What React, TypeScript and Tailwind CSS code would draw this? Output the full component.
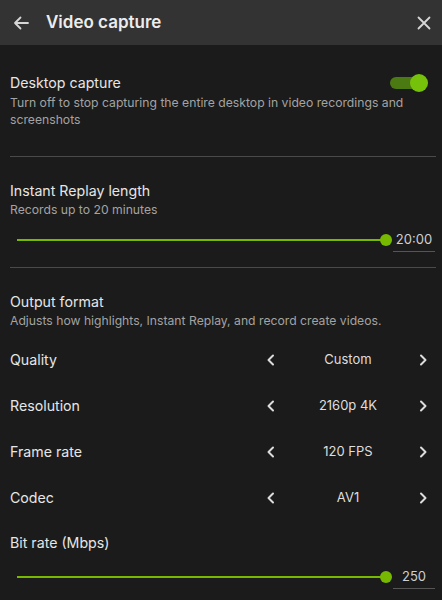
import React from "react";

const font = { fontFamily: "Inter, 'Noto Sans', sans-serif" };

const Chevron = ({ dir }: { dir: "left" | "right" }) => (
  <svg width="10" height="12" viewBox="0 0 10 12" fill="none">
    <path
      d={dir === "left" ? "M7 1.5 L2.5 6 L7 10.5" : "M3 1.5 L7.5 6 L3 10.5"}
      stroke="#dcdcdc"
      strokeWidth="2"
      strokeLinecap="round"
      strokeLinejoin="round"
    />
  </svg>
);

const Slider = ({ value }: { value: string }) => (
  <div className="flex items-center h-[24px] mr-[-3px]">
    <div className="relative flex-1 ml-[7px] mr-[7px] h-[2px] bg-[#76b900]">
      <div className="absolute right-[-6px] top-[-5px] w-[12px] h-[12px] rounded-full bg-[#76b900]" />
    </div>
    <div className="w-[42px] h-[24px] flex items-center justify-center border-b border-[#555] text-[13px] text-[#cfcfcf]">
      {value}
    </div>
  </div>
);

const Selector = ({ label, value }: { label: string; value: string }) => (
  <div className="flex items-center h-[46px]">
    <div className="flex-1 text-[14.2px] text-[#e6e6e6]">{label}</div>
    <div className="w-[166px] flex items-center justify-between pr-[4px]">
      <Chevron dir="left" />
      <span className="text-[13px] text-[#dedede] pl-[2px]">{value}</span>
      <Chevron dir="right" />
    </div>
  </div>
);

export default function App() {
  return (
    <div className="w-[442px] h-[600px] bg-[#1b1b1b] overflow-hidden" style={font}>
      {/* Header */}
      <div className="h-[45px] bg-[#333333] flex items-center px-[13px]">
        <svg width="16" height="14" viewBox="0 0 16 14" fill="none">
          <path
            d="M15 7 H2 M7.5 1.5 L2 7 L7.5 12.5"
            stroke="#d6d6d6"
            strokeWidth="1.8"
            strokeLinecap="round"
            strokeLinejoin="round"
          />
        </svg>
        <h1 className="ml-[17px] flex-1 text-[17px] font-semibold text-[#ececec]">Video capture</h1>
        <svg width="14" height="14" viewBox="0 0 14 14" fill="none" className="mr-[-2px]">
          <path d="M1.5 1.5 L12.5 12.5 M12.5 1.5 L1.5 12.5" stroke="#d6d6d6" strokeWidth="1.8" strokeLinecap="round" />
        </svg>
      </div>

      <div className="px-[10px]">
        {/* Desktop capture */}
        <div className="pt-[28px] pb-[28px] border-b border-[#4a4a4a] mr-[-4px] pr-[4px]">
          <div className="flex items-center h-[20px]">
            <div className="flex-1 text-[14.2px] text-[#e6e6e6]">Desktop capture</div>
            <div className="relative w-[32px] h-[12px] rounded-full bg-[#4c7a12] mr-[10px]">
              <div className="absolute right-[-6px] top-[-3px] w-[18px] h-[18px] rounded-full bg-[#76c20a]" />
            </div>
          </div>
          <p className="mt-[1px] text-[12.2px] leading-[17px] text-[#a3a3a3] pr-[20px]">
            Turn off to stop capturing the entire desktop in video recordings and screenshots
          </p>
        </div>

        {/* Instant Replay */}
        <div className="pt-[23px] pb-[15px] border-b border-[#4a4a4a] mr-[-4px] pr-[4px]">
          <div className="h-[20px] text-[14.2px] text-[#e6e6e6]">Instant Replay length</div>
          <p className="mt-[1px] text-[12.2px] leading-[17px] text-[#a3a3a3]">Records up to 20 minutes</p>
          <div className="mt-[10px]">
            <Slider value="20:00" />
          </div>
        </div>

        {/* Output format */}
        <div className="pt-[23px]">
          <div className="h-[20px] text-[14.2px] text-[#e6e6e6]">Output format</div>
          <p className="mt-[1px] text-[12.2px] leading-[17px] text-[#a3a3a3]">
            Adjusts how highlights, Instant Replay, and record create videos.
          </p>
          <div className="mt-[8px]">
            <Selector label="Quality" value="Custom" />
            <Selector label="Resolution" value="2160p 4K" />
            <Selector label="Frame rate" value="120 FPS" />
            <Selector label="Codec" value="AV1" />
          </div>
          <div className="mt-[11px] h-[20px] text-[14.2px] text-[#e6e6e6]">Bit rate (Mbps)</div>
          <div className="mt-[13px]">
            <Slider value="250" />
          </div>
        </div>
      </div>
    </div>
  );
}
